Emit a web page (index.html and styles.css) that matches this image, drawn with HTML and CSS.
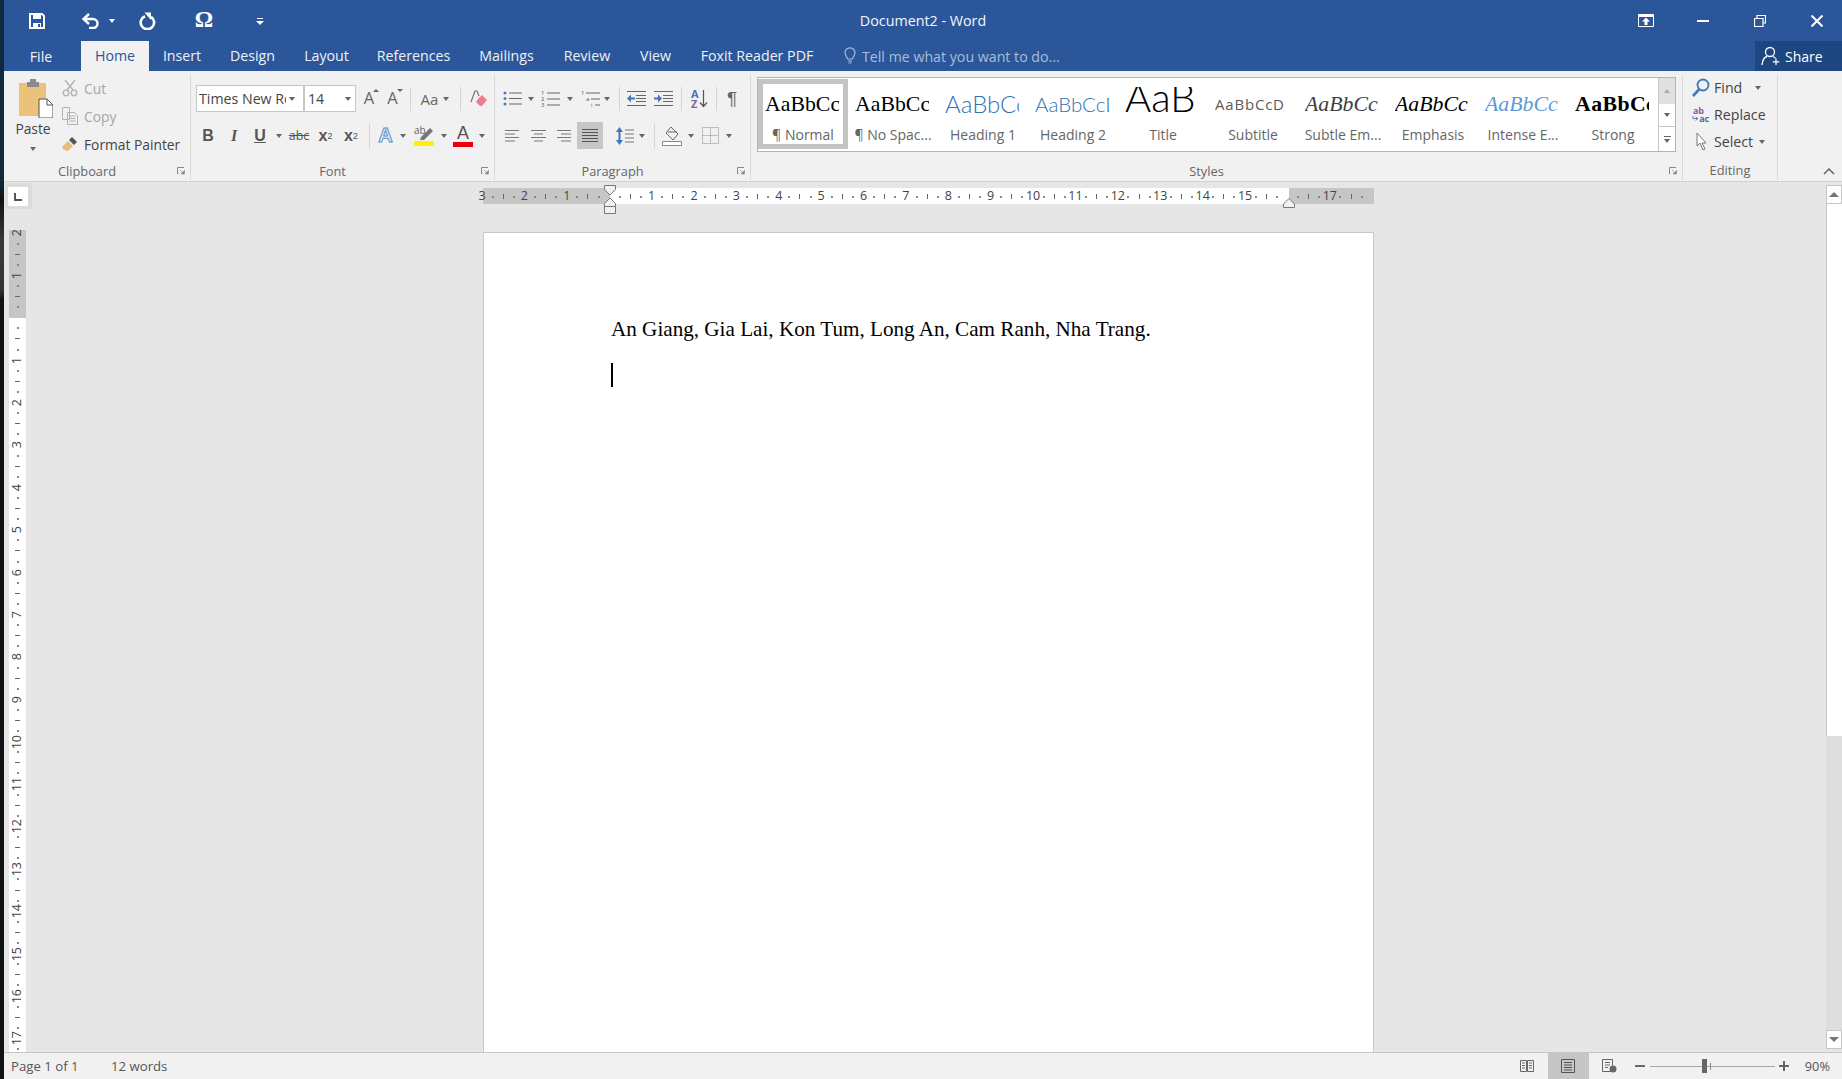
FILE: index.html
```html
<!DOCTYPE html>
<html lang="en">
<head>
<meta charset="utf-8">
<title>Document2 - Word</title>
<link rel="stylesheet" href="styles.css">
</head>
<body>
<div class="edge"></div>
<div class="app">
  <header class="titlebar">
    <div class="qat">
      <svg class="q-save" width="16" height="16" viewBox="0 0 16 16"><path d="M1 1h12l2 2v12H1z" fill="none" stroke="#fff" stroke-width="2"/><path d="M4 1h8v5H4zM4 10h8v5H4z" fill="#fff"/><path d="M9 11h2v3H9z" fill="#2b579a"/></svg>
      <svg class="q-undo" width="18" height="16" viewBox="0 0 18 16"><path d="M3 6h9a4.500 4.500 0 0 1 0 9H8" fill="none" stroke="#fff" stroke-width="2.400"/><path d="M8 1L2.500 6 8 11" fill="none" stroke="#fff" stroke-width="2.400"/></svg>
      <span class="caret caret-w q-drop"></span>
      <svg class="q-redo" width="17" height="18" viewBox="0 0 17 18"><path d="M6 4.200A6.700 6.700 0 1 0 12 4.800" fill="none" stroke="#fff" stroke-width="2.600"/><path d="M5.500 .500l6.500 0 0 7.500z" fill="#fff"/></svg>
      <span class="q-omega">Ω</span>
      <svg class="q-cust" width="8" height="8" viewBox="0 0 8 8"><path d="M1 1h6v1H1zM0 4h8L4 8z" fill="#fff"/></svg>
    </div>
    <div class="doc-title">Document2 - Word</div>
    <div class="winctl">
      <svg width="16" height="13" viewBox="0 0 16 13"><path d="M.5.500h15v12H.5z" fill="none" stroke="#fff"/><path d="M1 1h14v2H1z" fill="#fff"/><path d="M8 3.500l4 4H9.500V11h-3V7.500H4z" fill="#fff"/></svg>
      <svg width="12" height="16" viewBox="0 0 12 16"><path d="M0 7h12v2H0z" fill="#fff"/></svg>
      <svg width="12" height="12" viewBox="0 0 12 12"><path d="M3 3V.500h8.500V8H9M.5 3.500H9v8H.5z" fill="none" stroke="#fff" stroke-width="1.200"/></svg>
      <svg width="12" height="12" viewBox="0 0 12 12"><path d="M.5.500l11 11M11.500.500l-11 11" stroke="#fff" stroke-width="2"/></svg>
    </div>
  </header>

  <nav class="tabrow">
    <div class="tabs">
      <span class="tab">File</span>
      <span class="tab tab-on">Home</span>
      <span class="tab">Insert</span>
      <span class="tab">Design</span>
      <span class="tab">Layout</span>
      <span class="tab">References</span>
      <span class="tab">Mailings</span>
      <span class="tab">Review</span>
      <span class="tab">View</span>
      <span class="tab">Foxit Reader PDF</span>
    </div>
    <div class="tellme">
      <svg width="12" height="18" viewBox="0 0 12 18"><path d="M3.500 12C3 9.500 1 8.500 1 5.800a5 5 0 0 1 10 0C11 8.500 9 9.500 8.500 12zM4 14h4M4.500 16h3" fill="none" stroke="#a9bdd9" stroke-width="1.200"/></svg>
      <span>Tell me what you want to do...</span>
    </div>
    <div class="share">
      <svg width="20" height="20" viewBox="0 0 20 20"><circle cx="9" cy="6" r="4.500" fill="none" stroke="#fff" stroke-width="1.300"/><path d="M1 19c.5-5 3-8 5-8.500M12 10.500c1 .3 2 1 2.500 2" fill="none" stroke="#fff" stroke-width="1.300"/><path d="M15 12.500v6.500M11.700 15.800h6.600" stroke="#fff" stroke-width="1.200"/></svg>
      <span>Share</span>
    </div>
  </nav>

  <section class="ribbon">
    <div class="group g-clip">
      <div class="gbody clip-body">
        <div class="paste">
          <svg class="paste-ic" width="34" height="39" viewBox="0 0 34 39"><path d="M0 4h27v33H0z" fill="#ecc27a"/><path d="M8 3h3V0h6v3h3v5H8z" fill="#8a8a8a"/><path d="M20 20h8l6 6v13H20z" fill="#fff" stroke="#555"/><path d="M28 20v6h6" fill="none" stroke="#555"/></svg>
          <span class="paste-lb">Paste</span>
          <span class="caret paste-caret"></span>
        </div>
        <div class="clip-list">
          <div class="clip-row off">
            <svg width="16" height="18" viewBox="0 0 16 18"><path d="M3 1l8 10M13 1L5 11" stroke="#b2b2b2" stroke-width="1.400"/><circle cx="4" cy="14" r="2.800" fill="none" stroke="#b2b2b2" stroke-width="1.300"/><circle cx="12" cy="14" r="2.800" fill="none" stroke="#b2b2b2" stroke-width="1.300"/></svg>
            <span>Cut</span>
          </div>
          <div class="clip-row off">
            <svg width="16" height="18" viewBox="0 0 16 18"><path d="M.5.500h7v12h-7zM5.500 5.500h7l3 3v9h-10z" fill="#f1f1f1" stroke="#b2b2b2"/><path d="M7.500 9h6M7.500 11.500h6M7.500 14h6" stroke="#b2b2b2"/></svg>
            <span>Copy</span>
          </div>
          <div class="clip-row">
            <svg width="16" height="16" viewBox="0 0 16 16"><path d="M0 11l6-6 5 5-5 5H3l1-2-2 1z" fill="#e8bd7a"/><path d="M7 4l3-3 5 5-3 3z" fill="#555"/></svg>
            <span>Format Painter</span>
          </div>
        </div>
      </div>
      <div class="glabel">Clipboard</div>
      <svg class="launch" width="8" height="8" viewBox="0 0 8 8"><path d="M.5 7V.500H7" fill="none" stroke="#888"/><path d="M3 3l4 4M4 7h3.500V3.500z" stroke="#888" fill="#888" stroke-width=".6"/></svg>
    </div>

    <div class="group g-font">
      <div class="gbody font-body">
        <div class="row row1">
          <div class="combo combo-name"><span class="combo-val">Times New Roman</span><span class="caret"></span></div>
          <div class="combo combo-size"><span class="combo-val">14</span><span class="caret"></span></div>
          <div class="btn w26"><span class="txt-a">A<i class="up"></i></span></div>
          <div class="btn w21"><span class="txt-a">A<i class="down"></i></span></div>
          <div class="btn w15"><i class="sep"></i></div>
          <div class="btn w23 txt-aa">Aa</div>
          <div class="btn w10"><span class="caret"></span></div>
          <div class="btn w18"><i class="sep"></i></div>
          <div class="btn w20">
            <svg width="18" height="18" viewBox="0 0 18 18"><path d="M1 12L5 1h2l2 5" fill="none" stroke="#777" stroke-width="1.200"/><path d="M8 9l4-4 5 5-5 6h-2l-4-4z" fill="#ee7d8c"/></svg>
          </div>
        </div>
        <div class="row row2 font-row2">
          <div class="btn w26 t-b">B</div>
          <div class="btn w26 t-i">I</div>
          <div class="btn w26 t-u">U</div>
          <div class="btn w12"><span class="caret"></span></div>
          <div class="btn w28 t-abc">abc</div>
          <div class="btn w25 t-x">x<sub>2</sub></div>
          <div class="btn w26 t-x">x<sup>2</sup></div>
          <div class="btn w10"><i class="sep"></i></div>
          <div class="btn w23 t-fx">A</div>
          <div class="btn w12"><span class="caret"></span></div>
          <div class="btn w29">
            <svg width="20" height="20" viewBox="0 0 20 20"><text x="0" y="8" class="svg-ab">ab</text><path d="M6 14l1-3 9-9 3 3-9 9z" fill="#777"/><path d="M0 15h20v5H0z" fill="#fff200"/></svg>
          </div>
          <div class="btn w11"><span class="caret"></span></div>
          <div class="btn w28 col-a"><span class="t-col">A</span><i class="red"></i></div>
          <div class="btn w10"><span class="caret"></span></div>
        </div>
      </div>
      <div class="glabel">Font</div>
      <svg class="launch" width="8" height="8" viewBox="0 0 8 8"><path d="M.5 7V.500H7" fill="none" stroke="#888"/><path d="M3 3l4 4M4 7h3.500V3.500z" stroke="#888" fill="#888" stroke-width=".6"/></svg>
    </div>

    <div class="group g-para">
      <div class="gbody para-body">
        <div class="row row1">
          <div class="btn w19"><svg width="19" height="15" viewBox="0 0 19 15"><g fill="#4a7ebb"><circle cx="2" cy="2" r="1.500"/><circle cx="2" cy="7.500" r="1.500"/><circle cx="2" cy="13" r="1.500"/></g><path d="M6 2h13M6 7.500h13M6 13h13" stroke="#666"/></svg></div>
          <div class="btn w18"><span class="caret"></span></div>
          <div class="btn w21"><svg width="19" height="17" viewBox="0 0 19 17"><g class="svg-num"><text x="0" y="5">1</text><text x="0" y="11">2</text><text x="0" y="17">3</text></g><path d="M6 3h13M6 9h13M6 15h13" stroke="#666"/></svg></div>
          <div class="btn w18"><span class="caret"></span></div>
          <div class="btn w23"><svg width="19" height="17" viewBox="0 0 19 17"><g class="svg-num"><text x="0" y="5">1</text><text x="5" y="11">a</text><text x="10" y="17">i</text></g><path d="M5 3h14M10 9h9M14 15h5" stroke="#666"/></svg></div>
          <div class="btn w10"><span class="caret"></span></div>
          <div class="btn w14"><i class="sep"></i></div>
          <div class="btn w21"><svg width="19" height="15" viewBox="0 0 19 15"><path d="M0 .500h19M0 14.500h19M9 4.500h10M9 7.500h10M9 10.500h10" stroke="#666"/><path d="M0 7.500l4-4v3h4v2H4v3z" fill="#3f78b5"/></svg></div>
          <div class="btn w32"><svg width="19" height="15" viewBox="0 0 19 15"><path d="M0 .500h19M0 14.500h19M9 4.500h10M9 7.500h10M9 10.500h10" stroke="#666"/><path d="M8 7.500l-4-4v3H0v2h4v3z" fill="#3f78b5"/></svg></div>
          <div class="btn w4"><i class="sep"></i></div>
          <div class="btn w32"><svg width="17" height="20" viewBox="0 0 17 20"><text x="0" y="9" class="svg-az az-a">A</text><text x="0" y="19" class="svg-az az-z">Z</text><path d="M12.500 1v16M9 13.500l3.500 4 3.500-4" fill="none" stroke="#555" stroke-width="1.200"/></svg></div>
          <div class="btn w2"><i class="sep"></i></div>
          <div class="btn w30 t-pil">¶</div>
        </div>
        <div class="row row2">
          <div class="btn w18"><svg width="14" height="12" viewBox="0 0 14 12"><path d="M0 .500h14M0 4h10M0 7.500h14M0 11h10" stroke="#777"/></svg></div>
          <div class="btn w34"><svg width="15" height="12" viewBox="0 0 15 12"><path d="M0 .500h15M3 4h9M0 7.500h15M3 11h9" stroke="#777"/></svg></div>
          <div class="btn w18"><svg width="14" height="12" viewBox="0 0 14 12"><path d="M0 .500h14M4 4h10M0 7.500h14M4 11h10" stroke="#777"/></svg></div>
          <div class="btn w26 ml4 btn-on"><svg width="16" height="14" viewBox="0 0 16 14"><path d="M0 .500h16M0 3.500h16M0 6.500h16M0 9.500h16M0 12.500h16" stroke="#555"/></svg></div>
          <div class="btn w18 ml13"><svg width="18" height="18" viewBox="0 0 18 18"><path d="M3.500 3v12" stroke="#3f78b5" stroke-width="2"/><path d="M3.500 0L7 5H0zM3.500 18L7 13H0z" fill="#3f78b5"/><path d="M9 3h9M9 7h9M9 11h9M9 15h9" stroke="#777"/></svg></div>
          <div class="btn w16"><span class="caret"></span></div>
          <div class="btn w8"><i class="sep"></i></div>
          <div class="btn w20 ml4"><svg width="20" height="20" viewBox="0 0 20 20"><path d="M9 1l7 7-5 6-7-7z" fill="#f1f1f1" stroke="#666"/><path d="M6 6h9" stroke="#666"/><path d="M.5 15.500h19v4H.5z" fill="#fff" stroke="#888"/></svg></div>
          <div class="btn w18"><span class="caret"></span></div>
          <div class="btn w17 ml2"><svg width="17" height="17" viewBox="0 0 17 17"><path d="M.5.500h16v16H.5zM8.500.500v16M.5 8.500h16" fill="none" stroke="#8a8a8a" stroke-dasharray="1 1"/></svg></div>
          <div class="btn w20"><span class="caret"></span></div>
        </div>
      </div>
      <div class="glabel">Paragraph</div>
      <svg class="launch" width="8" height="8" viewBox="0 0 8 8"><path d="M.5 7V.500H7" fill="none" stroke="#888"/><path d="M3 3l4 4M4 7h3.500V3.500z" stroke="#888" fill="#888" stroke-width=".6"/></svg>
    </div>

    <div class="group g-styles">
      <div class="gbody styles-body">
        <div class="gallery">
          <div class="sty sty-on"><div class="pv pv-serif">AaBbCc</div><div class="sty-lb">¶ Normal</div></div>
          <div class="sty"><div class="pv pv-serif">AaBbCc</div><div class="sty-lb">¶ No Spac...</div></div>
          <div class="sty"><div class="pv pv-h1">AaBbCc</div><div class="sty-lb">Heading 1</div></div>
          <div class="sty"><div class="pv pv-h2">AaBbCcD</div><div class="sty-lb">Heading 2</div></div>
          <div class="sty"><div class="pv pv-title">AaB</div><div class="sty-lb">Title</div></div>
          <div class="sty"><div class="pv pv-sub">AaBbCcD</div><div class="sty-lb">Subtitle</div></div>
          <div class="sty"><div class="pv pv-se">AaBbCc</div><div class="sty-lb">Subtle Em...</div></div>
          <div class="sty"><div class="pv pv-em">AaBbCc</div><div class="sty-lb">Emphasis</div></div>
          <div class="sty"><div class="pv pv-ie">AaBbCc</div><div class="sty-lb">Intense E...</div></div>
          <div class="sty"><div class="pv pv-strong">AaBbCc</div><div class="sty-lb">Strong</div></div>
          <div class="gal-scroll">
            <div class="gs gs-up"><span class="caret caret-up"></span></div>
            <div class="gs gs-dn"><span class="caret"></span></div>
            <div class="gs gs-more"><i class="gs-bar"></i><span class="caret"></span></div>
          </div>
        </div>
      </div>
      <div class="glabel">Styles</div>
      <svg class="launch" width="8" height="8" viewBox="0 0 8 8"><path d="M.5 7V.500H7" fill="none" stroke="#888"/><path d="M3 3l4 4M4 7h3.500V3.500z" stroke="#888" fill="#888" stroke-width=".6"/></svg>
    </div>

    <div class="group g-edit">
      <div class="gbody edit-body">
        <div class="edit-row">
          <svg width="18" height="19" viewBox="0 0 18 19"><circle cx="11" cy="7" r="5.500" fill="none" stroke="#3f78b5" stroke-width="1.800"/><path d="M7 11.500L1 18" stroke="#3f78b5" stroke-width="2.600"/></svg>
          <span>Find</span><span class="caret caret-find"></span>
        </div>
        <div class="edit-row">
          <svg width="18" height="18" viewBox="0 0 20 18"><text x="1" y="8" class="svg-rep rep-ab">ab</text><text x="8" y="17" class="svg-rep rep-ac">ac</text><path d="M1 10v3h5M4 11l2.500 2L4 15" fill="none" stroke="#3f78b5"/></svg>
          <span>Replace</span>
        </div>
        <div class="edit-row">
          <svg width="18" height="19" viewBox="0 0 18 19"><path d="M5 1v13l3-3 3 7 2-1-3-6h4z" fill="#fff" stroke="#777"/></svg>
          <span>Select</span><span class="caret caret-sel"></span>
        </div>
      </div>
      <div class="glabel">Editing</div>
    </div>

    <div class="collapse">
      <svg width="12" height="7" viewBox="0 0 12 7"><path d="M1 6l5-5 5 5" fill="none" stroke="#666" stroke-width="1.500"/></svg>
    </div>
  </section>

  <main class="work">
    <aside class="vcol">
      <div class="corner"><div class="corner-in"><i class="corner-l"></i></div></div>
      <div class="vruler">
        <div class="vtrack">
          <div class="vc"><b>2</b><i class="d"></i><i class="t"></i><i class="d"></i></div>
          <div class="vc"><b>1</b><i class="d"></i><i class="t"></i><i class="d"></i></div>
          <div class="vc"><b></b><i class="d"></i><i class="t"></i><i class="d"></i></div>
          <div class="vc"><b>1</b><i class="d"></i><i class="t"></i><i class="d"></i></div>
          <div class="vc"><b>2</b><i class="d"></i><i class="t"></i><i class="d"></i></div>
          <div class="vc"><b>3</b><i class="d"></i><i class="t"></i><i class="d"></i></div>
          <div class="vc"><b>4</b><i class="d"></i><i class="t"></i><i class="d"></i></div>
          <div class="vc"><b>5</b><i class="d"></i><i class="t"></i><i class="d"></i></div>
          <div class="vc"><b>6</b><i class="d"></i><i class="t"></i><i class="d"></i></div>
          <div class="vc"><b>7</b><i class="d"></i><i class="t"></i><i class="d"></i></div>
          <div class="vc"><b>8</b><i class="d"></i><i class="t"></i><i class="d"></i></div>
          <div class="vc"><b>9</b><i class="d"></i><i class="t"></i><i class="d"></i></div>
          <div class="vc"><b>10</b><i class="d"></i><i class="t"></i><i class="d"></i></div>
          <div class="vc"><b>11</b><i class="d"></i><i class="t"></i><i class="d"></i></div>
          <div class="vc"><b>12</b><i class="d"></i><i class="t"></i><i class="d"></i></div>
          <div class="vc"><b>13</b><i class="d"></i><i class="t"></i><i class="d"></i></div>
          <div class="vc"><b>14</b><i class="d"></i><i class="t"></i><i class="d"></i></div>
          <div class="vc"><b>15</b><i class="d"></i><i class="t"></i><i class="d"></i></div>
          <div class="vc"><b>16</b><i class="d"></i><i class="t"></i><i class="d"></i></div>
          <div class="vc"><b>17</b><i class="d"></i><i class="t"></i><i class="d"></i></div>
        </div>
      </div>
    </aside>
    <div class="canvas">
      <div class="hruler">
        <div class="htrack">
          <div class="hc"><b>3</b><i class="d"></i><i class="t"></i><i class="d"></i></div>
          <div class="hc"><b>2</b><i class="d"></i><i class="t"></i><i class="d"></i></div>
          <div class="hc"><b>1</b><i class="d"></i><i class="t"></i><i class="d"></i></div>
          <div class="hc"><b></b><i class="d"></i><i class="t"></i><i class="d"></i></div>
          <div class="hc"><b>1</b><i class="d"></i><i class="t"></i><i class="d"></i></div>
          <div class="hc"><b>2</b><i class="d"></i><i class="t"></i><i class="d"></i></div>
          <div class="hc"><b>3</b><i class="d"></i><i class="t"></i><i class="d"></i></div>
          <div class="hc"><b>4</b><i class="d"></i><i class="t"></i><i class="d"></i></div>
          <div class="hc"><b>5</b><i class="d"></i><i class="t"></i><i class="d"></i></div>
          <div class="hc"><b>6</b><i class="d"></i><i class="t"></i><i class="d"></i></div>
          <div class="hc"><b>7</b><i class="d"></i><i class="t"></i><i class="d"></i></div>
          <div class="hc"><b>8</b><i class="d"></i><i class="t"></i><i class="d"></i></div>
          <div class="hc"><b>9</b><i class="d"></i><i class="t"></i><i class="d"></i></div>
          <div class="hc"><b>10</b><i class="d"></i><i class="t"></i><i class="d"></i></div>
          <div class="hc"><b>11</b><i class="d"></i><i class="t"></i><i class="d"></i></div>
          <div class="hc"><b>12</b><i class="d"></i><i class="t"></i><i class="d"></i></div>
          <div class="hc"><b>13</b><i class="d"></i><i class="t"></i><i class="d"></i></div>
          <div class="hc"><b>14</b><i class="d"></i><i class="t"></i><i class="d"></i></div>
          <div class="hc"><b>15</b><i class="d"></i><i class="t"></i><i class="d"></i></div>
          <div class="hc"><b></b><i class="d"></i><i class="t"></i><i class="d"></i></div>
          <div class="hc"><b>17</b><i class="d"></i><i class="t"></i><i class="d"></i></div>
        </div>
        <svg class="indent-l" width="12" height="29" viewBox="0 0 12 29"><path d="M.5.500h11v4L6 10 .5 4.500zM6 13l5.500 5.500v3H.5v-3zM.5 21.500h11v7H.5z" fill="#f1f1f1" stroke="#777"/></svg>
        <svg class="indent-r" width="12" height="10" viewBox="0 0 12 10"><path d="M6 .500l5.500 5.500v3.500H.5V6z" fill="#f1f1f1" stroke="#777"/></svg>
      </div>
      <article class="page">
        <p class="para">An Giang, Gia Lai, Kon Tum, Long An, Cam Ranh, Nha Trang.</p>
        <p class="para para-caret"><i class="cursor"></i></p>
      </article>
    </div>
    <aside class="vscroll">
      <div class="vs-btn"><span class="caret caret-up caret-big"></span></div>
      <div class="vs-thumb"></div>
      <div class="vs-track"></div>
      <div class="vs-btn"><span class="caret caret-big"></span></div>
    </aside>
  </main>

  <footer class="status">
    <span class="st-page">Page 1 of 1</span>
    <span class="st-words">12 words</span>
    <div class="st-right">
      <div class="st-btn"><svg width="14" height="14" viewBox="0 0 14 14"><path d="M.5 1.500h6v11h-6zM7.500 1.500h6v11h-6zM2 4h3M2 6.500h3M2 9h3M9 4h3M9 6.500h3M9 9h3" fill="none" stroke="#666"/></svg></div>
      <div class="st-btn st-on"><svg width="14" height="14" viewBox="0 0 14 14"><path d="M.5.500h13v13H.5zM3 3.500h8M3 6h8M3 8.500h8M3 11h8" fill="none" stroke="#555"/></svg></div>
      <div class="st-btn"><svg width="15" height="14" viewBox="0 0 15 14"><path d="M9 12.500H.5V.500h10v6M3 3.500h5M3 6h5M3 8.500h3" fill="none" stroke="#666"/><circle cx="11" cy="10" r="3.500" fill="#666"/></svg></div>
      <div class="zoom-minus"></div>
      <div class="slider"><i class="sl-tick"></i><i class="sl-thumb"></i></div>
      <div class="zoom-plus"></div>
      <span class="st-zoom">90%</span>
    </div>
  </footer>
</div>
</body>
</html>
```

FILE: styles.css
```css
* { box-sizing: border-box; }
html, body { margin: 0; height: 100%; }
body {
  display: flex;
  width: 1842px;
  height: 1079px;
  overflow: hidden;
  font-family: "Open Sans", "Noto Sans", sans-serif;
  font-size: 13.800px;
  color: #444;
  background: #e6e6e6;
}
i { font-style: normal; display: block; }
.edge { width: 4px; flex: none; background: linear-gradient(#0e2a3e 0, #0e2a3e 180px, #111 200px, #3a3a3a 240px, #333 290px, #111 300px, #111 100%); }
.app { flex: 1; display: flex; flex-direction: column; min-width: 0; }

/* title bar */
.titlebar { height: 41px; flex: none; display: grid; grid-template-columns: 1fr auto 1fr; align-items: center; background: #2b579a; color: #fff; }
.qat { display: flex; align-items: center; padding-left: 25px; }
.q-undo { margin-left: 36px; }
.q-drop { margin-left: 10px; }
.q-redo { margin-left: 24px; }
.q-omega { margin-left: 38px; font: bold 23px "Liberation Serif", serif; line-height: 1; width: 20px; text-align: center; margin-top: -3px; }
.q-cust { margin-left: 42px; }
.doc-title { font-size: 14.300px; color: #f4f6fa; }
.winctl { display: flex; align-items: center; justify-content: flex-end; gap: 45px; padding-right: 19px; }
.winctl svg:first-child { margin-right: -2px; }

/* tabs */
.tabrow { height: 30px; flex: none; display: flex; background: #2b579a; }
.tabs { display: grid; grid-template-columns: 77px 68px 66px 75px 73px 101px 85px 76px 61px 142px; }
.tab { display: flex; align-items: center; justify-content: center; padding-bottom: 1px; color: #eef2f8; font-size: 14.200px; white-space: nowrap; }
.tab:first-child { padding: 1px 3px 0 0; }
.tab-on { background: #f1f1f1; color: #2b579a; }
.tellme { flex: 1; display: flex; align-items: center; gap: 6px; padding-left: 16px; color: #a9bdd9; font-size: 14.200px; }
.share { width: 87px; flex: none; display: flex; align-items: center; gap: 4px; padding-left: 6px; background: #1e4680; color: #fff; font-size: 14px; }

/* ribbon */
.ribbon { height: 111px; flex: none; display: flex; background: #f1f1f1; border-bottom: 1px solid #d2d2d2; padding-top: 4px; }
.group { position: relative; display: flex; flex-direction: column; flex: none; border-right: 1px solid #d8d8d8; margin-bottom: 1px; }
.g-clip { width: 187px; }
.g-font { width: 304px; }
.g-para { width: 256px; }
.g-styles { width: 932px; }
.g-edit { width: 95px; }
.gbody { height: 87px; flex: none; }
.glabel { text-align: center; font-size: 12.800px; line-height: 19px; color: #666; padding-right: 20px; }
.g-edit .glabel { padding-right: 0; }
.launch { position: absolute; right: 5px; bottom: 5px; }
.collapse { flex: 1; display: flex; align-items: flex-end; justify-content: flex-end; padding: 0 7px 6px 0; }

.caret { display: block; width: 0; height: 0; border-left: 3.500px solid transparent; border-right: 3.500px solid transparent; border-top: 4px solid #666; flex: none; }
.caret-w { border-top-color: #fff; }
.caret-up { border-top: 0; border-bottom: 4px solid #aaa; }

.clip-body { display: flex; }
.paste { width: 58px; flex: none; display: flex; flex-direction: column; align-items: center; }
.paste-ic { margin: 4px 0 0 6px; }
.paste-lb { margin-top: 1px; line-height: 20px; font-size: 13.800px; }
.paste-caret { margin-top: 8px; }
.clip-list { display: flex; flex-direction: column; margin-top: -1px; }
.clip-row { height: 28px; display: flex; align-items: center; gap: 6px; white-space: nowrap; font-size: 13.800px; }
.off { color: #a6a6a6; }

.font-body { padding-left: 5px; }
.font-row2 { margin-left: -1px; }
.para-body { padding-left: 8px; }
.row { display: flex; align-items: center; }
.row1 { height: 27px; margin-top: 10px; }
.row2 { height: 27px; margin-top: 10px; }
.btn { display: flex; align-items: center; justify-content: center; flex: none; height: 27px; position: relative; }
.w2 { width: 2px; } .w4 { width: 4px; } .w8 { width: 8px; } .w10 { width: 10px; } .w11 { width: 11px; } .w12 { width: 12px; } .w14 { width: 14px; } .w15 { width: 15px; } .w16 { width: 16px; } .w17 { width: 17px; } .w18 { width: 18px; } .w19 { width: 19px; } .w20 { width: 20px; } .w21 { width: 21px; } .w23 { width: 23px; } .w25 { width: 25px; } .w26 { width: 26px; } .w28 { width: 28px; } .w29 { width: 29px; } .w30 { width: 30px; } .w32 { width: 32px; } .w34 { width: 34px; }
.ml2 { margin-left: 2px; } .ml4 { margin-left: 4px; } .ml13 { margin-left: 13px; }
.sep { width: 1px; height: 24px; background: #d4d4d4; flex: none; }
.btn-on { background: #c6c6c6; }

.combo { height: 27px; display: flex; align-items: center; background: #fff; border: 1px solid #c6c6c6; flex: none; overflow: hidden; }
.combo-name { width: 108px; padding: 0 4px 0 2px; }
.combo-name .combo-val { width: 87px; margin-right: 3px; overflow: hidden; white-space: nowrap; flex: none; }
.combo-size { width: 52px; padding: 0 4px 0 3px; justify-content: space-between; }
.combo-val { font-size: 14.200px; color: #444; }

.txt-a { position: relative; font-size: 16.500px; color: #666; line-height: 1; }
.up, .down { position: absolute; top: -1px; right: -5px; width: 0; height: 0; border-left: 3px solid transparent; border-right: 3px solid transparent; }
.up { border-bottom: 3px solid #666; }
.down { border-top: 3px solid #666; }
.txt-aa { font-size: 15px; color: #666; }
.t-b { font: bold 16px "Liberation Sans", sans-serif; color: #555; }
.t-i { font: italic bold 16px "Liberation Serif", serif; color: #555; }
.t-u { font: bold 16px "Liberation Sans", sans-serif; color: #555; text-decoration: underline; }
.t-abc { font-size: 12.500px; color: #555; text-decoration: line-through; }
.t-x { font: bold 16px "Liberation Sans", sans-serif; color: #555; }
.t-x sub, .t-x sup { font-size: 9px; font-weight: normal; }
.t-fx { font: bold 20px "Liberation Sans", sans-serif; color: #e8f1fa; -webkit-text-stroke: 1px #5b8fc9; }
.col-a { flex-direction: column; }
.t-col { font: 18px/17px "Liberation Sans", sans-serif; color: #555; }
.red { width: 20px; height: 5px; background: #e5000f; }
.t-pil { font: 19px "Liberation Sans", sans-serif; color: #666; }
.svg-ab { font: 10px "Open Sans", sans-serif; fill: #666; }
.svg-num { font: 6px "Open Sans", sans-serif; fill: #555; }
.svg-az { font: bold 11px "Open Sans", sans-serif; }
.az-a { fill: #3f78b5; }
.az-z { fill: #8e5ba8; }
.svg-rep { font: bold 10px "Open Sans", sans-serif; }
.rep-ab { fill: #8e5ba8; }
.rep-ac { fill: #4a6fa5; }

/* gallery */
.styles-body { padding: 2px 0 0 6px; }
.gallery { width: 919px; height: 75px; display: flex; background: #fff; border: 1px solid #b4b4b4; padding-top: 1px; }
.sty { width: 90px; height: 70px; flex: none; border: 5px solid transparent; display: flex; flex-direction: column; }
.sty-on { border-color: #c4c4c4; }
.pv { height: 48px; margin: -5px 0 0 2px; width: 74px; overflow: hidden; white-space: nowrap; color: #000; flex: none; }
.pv-serif { font: 21.800px/50px "Liberation Serif", serif; }
.pv-h1 { font: 300 24px/50px Lato, sans-serif; color: #2e74b5; }
.pv-h2 { font: 300 20.500px/50px Lato, sans-serif; color: #2e74b5; }
.pv-title { font: 300 40px/21px Lato, sans-serif; height: 26px; margin-top: 3px; margin-bottom: 14px; }
.pv-sub { font: 15px/50px "Open Sans", sans-serif; color: #5a5a5a; letter-spacing: .8px; }
.pv-se { font: italic 21.800px/50px "Liberation Serif", serif; color: #404040; }
.pv-em { font: italic 21.800px/50px "Liberation Serif", serif; }
.pv-ie { font: italic 21.800px/50px "Liberation Serif", serif; color: #5b9bd5; }
.pv-strong { font: bold 21.800px/50px "Liberation Serif", serif; letter-spacing: .4px; }
.sty-lb { text-align: center; font-size: 14px; line-height: 16px; color: #666; white-space: nowrap; margin-top: 0; }
.gal-scroll { width: 17px; flex: none; margin-top: -1px; display: flex; flex-direction: column; border-left: 1px solid #c6c6c6; }
.gs { display: flex; align-items: center; justify-content: center; flex-direction: column; gap: 2px; }
.gs-up { height: 26px; background: #e0e0e0; }
.gs-dn { height: 23px; border-bottom: 1px solid #c6c6c6; }
.gs-more { flex: 1; }
.gs-bar { width: 7px; height: 1px; background: #666; }

/* editing */
.edit-body { margin-top: -1px; }
.edit-row { height: 27px; display: flex; align-items: center; gap: 4px; padding-left: 9px; white-space: nowrap; font-size: 14.200px; }
.caret-find { margin-left: 9px; }
.caret-sel { margin-left: 2px; }

/* workspace */
.work { flex: 1; display: flex; min-height: 0; background: #e6e6e6; }
.vcol { width: 28px; flex: none; }
.corner { width: 27px; height: 26px; margin: 1px 0 0 1px; padding: 4px 4px 3px 3px; background: #dcdcdc; }
.corner-in { height: 100%; background: #fff; display: flex; align-items: center; justify-content: center; }
.corner-l { width: 8px; height: 8px; border-left: 2px solid #555; border-bottom: 2px solid #555; }
.vruler { width: 17px; height: 822px; margin: 21px 0 0 5px; overflow: hidden; background: linear-gradient(#c6c6c6 0, #c6c6c6 88px, #fff 88px); }
.vtrack { margin-top: -2.300px; display: flex; flex-direction: column; }
.vc { height: 42.400px; flex: none; display: grid; grid-template-rows: repeat(4, 10.600px); justify-items: center; align-items: center; }
.vc b { writing-mode: vertical-rl; transform: rotate(180deg); font-weight: 400; font-size: 12.500px; line-height: 1; color: #444; }
.d { width: 2px; height: 2px; background: #888; }
.t { width: 1px; height: 5px; background: #666; }
.vc .t { width: 5px; height: 1px; }

.canvas { flex: 1; min-width: 0; overflow: hidden; padding: 6px 0 0 451px; display: flex; flex-direction: column; }
.hruler { position: relative; width: 891px; height: 16px; flex: none; background: linear-gradient(90deg, #c6c6c6 0, #c6c6c6 127px, #fff 127px, #fff 806px, #c6c6c6 806px); }
.htrack { display: flex; margin-left: -6.300px; height: 100%; padding-top: 1px; }
.hc { width: 42.400px; flex: none; display: grid; grid-template-columns: repeat(4, 10.600px); justify-items: center; align-items: center; }
.hc b { font-weight: 400; font-size: 12.500px; line-height: 1; color: #444; }
.indent-l { position: absolute; left: 121px; top: -3px; }
.indent-r { position: absolute; left: 800px; top: 10px; }
.page { flex: 1; width: 891px; margin-top: 28px; background: #fff; border: 1px solid #c8c8c8; border-bottom: 0; padding: 84px 0 0 127px; color: #000; }
.para { margin: 0 0 22px; font: 21.150px/24px "Liberation Serif", serif; white-space: nowrap; }
.para-caret { height: 24px; }
.cursor { width: 1.500px; height: 24px; background: #000; }

.vscroll { width: 16px; flex: none; display: flex; flex-direction: column; padding: 3px 0 3px; background: #e6e6e6; }
.vs-btn { height: 19px; flex: none; background: #fff; border: 1px solid #c6c6c6; display: flex; align-items: center; justify-content: center; }
.vs-thumb { height: 532px; flex: none; background: #fff; border-left: 1px solid #c6c6c6; }
.vs-track { flex: 1; background: #dedede; }
.caret-big { border-left-width: 5px; border-right-width: 5px; border-top-width: 5px; border-top-color: #777; }
.caret-up.caret-big { border-top: 0; border-bottom: 5px solid #777; }

/* status */
.status { height: 27px; flex: none; display: flex; align-items: center; background: #f1f1f1; border-top: 1px solid #c6c6c6; padding-left: 7px; font-size: 13.200px; color: #555; }
.st-page { width: 100px; }
.st-right { margin-left: auto; display: flex; align-items: center; height: 100%; padding-right: 12px; }
.st-btn { width: 41px; height: 100%; display: flex; align-items: center; justify-content: center; }
.st-on { background: #c6c6c6; }
.zoom-minus { width: 20px; height: 2px; background: linear-gradient(90deg, transparent 5px, #666 5px, #666 15px, transparent 15px); }
.slider { position: relative; width: 125px; height: 1px; background: #a6a6a6; }
.sl-thumb { position: absolute; left: 52px; top: -7px; width: 5px; height: 14px; background: #666; }
.sl-tick { position: absolute; left: 60px; top: -3px; width: 1px; height: 7px; background: #888; }
.zoom-plus { position: relative; width: 16px; height: 10px; margin-left: 1px; background: linear-gradient(#666,#666) center/10px 2px no-repeat, linear-gradient(#666,#666) center/2px 10px no-repeat; }
.st-zoom { margin-left: 13px; font-size: 12.800px; }
```
